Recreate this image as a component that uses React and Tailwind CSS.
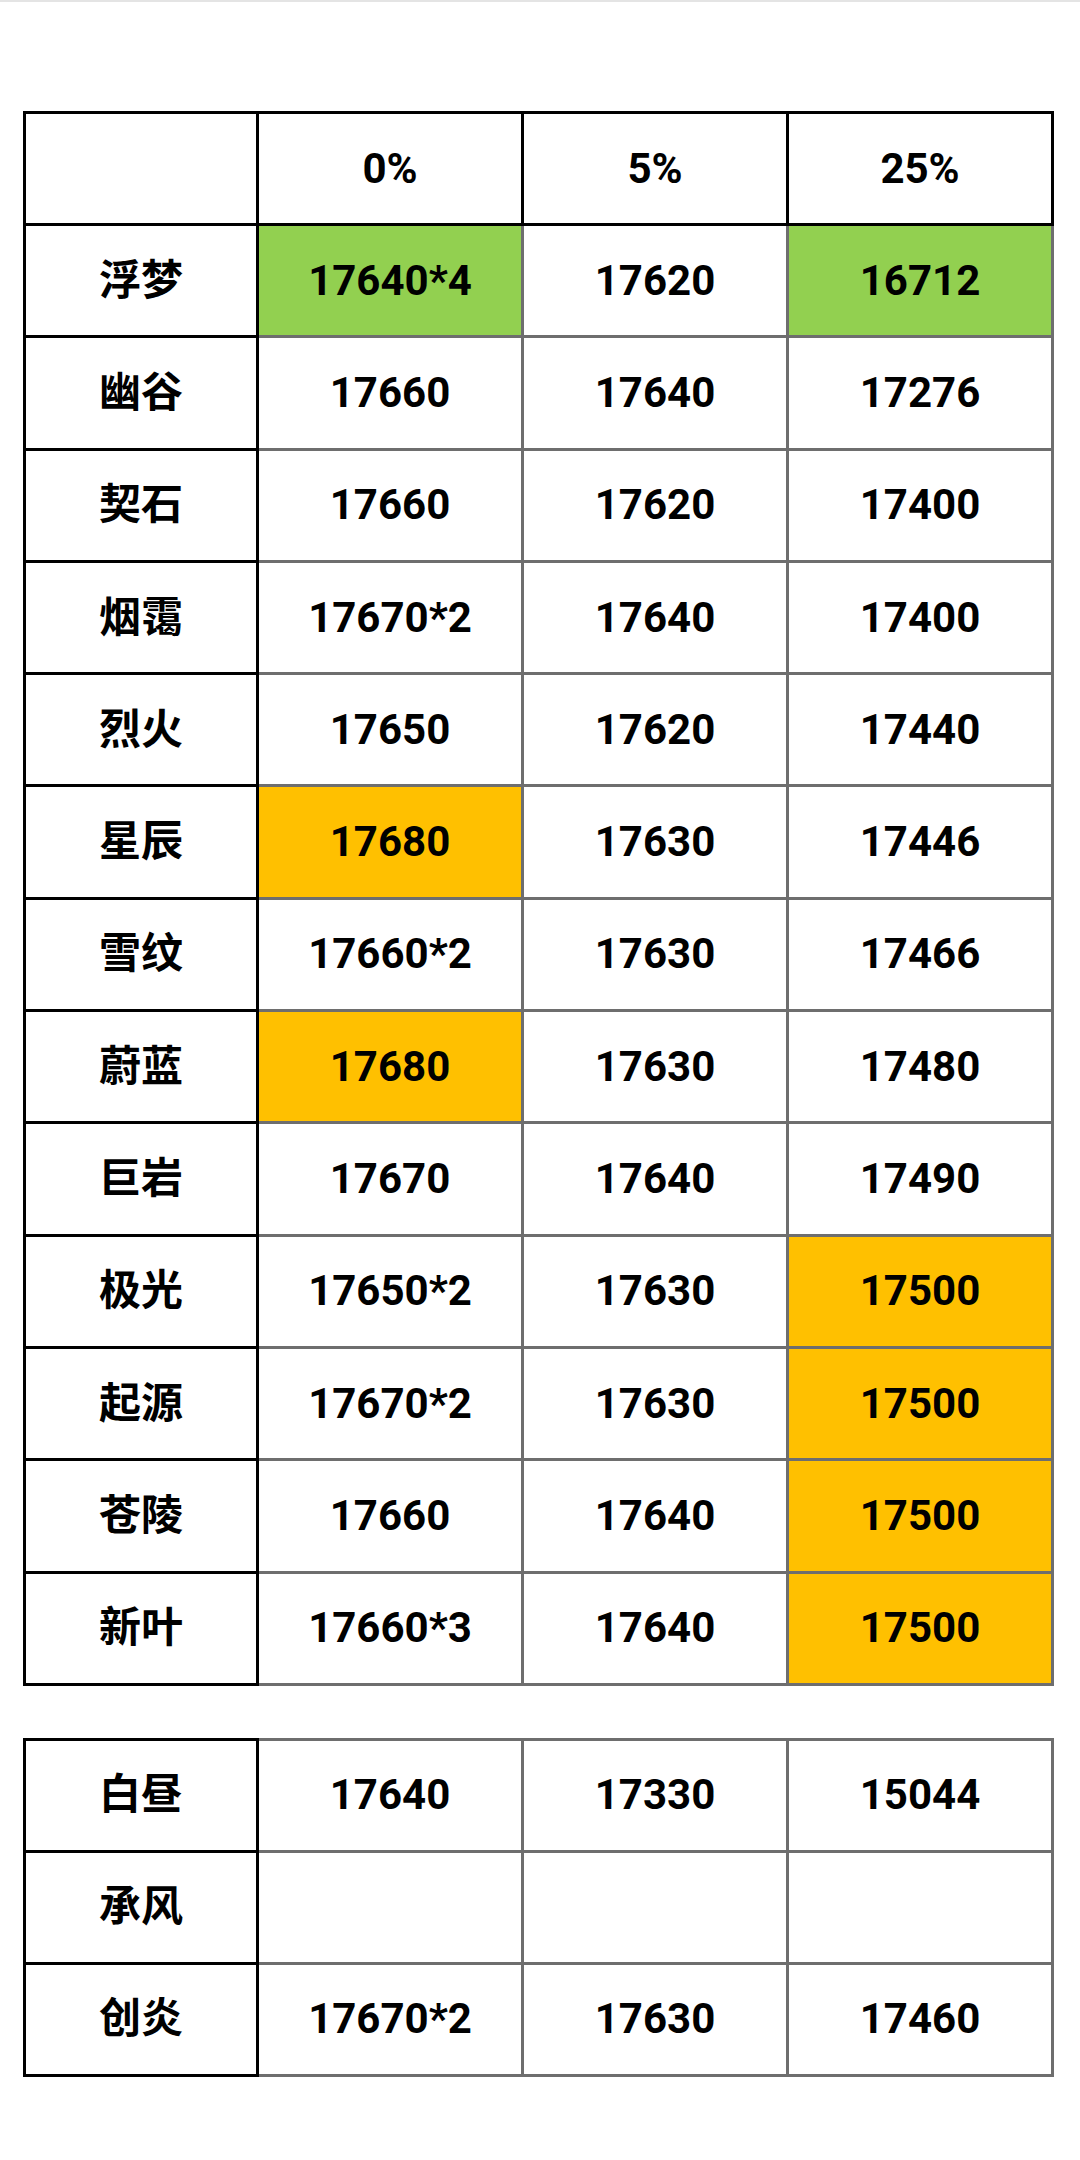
import React from "react";

const G = "green";
const O = "orange";

// [name, c0, c5, c25, highlights]
const mainRows = [
    ["浮梦", "17640*4", "17620", "16712", [G, null, G]],
    ["幽谷", "17660", "17640", "17276"],
    ["契石", "17660", "17620", "17400"],
    ["烟霭", "17670*2", "17640", "17400"],
    ["烈火", "17650", "17620", "17440"],
    ["星辰", "17680", "17630", "17446", [O, null, null]],
    ["雪纹", "17660*2", "17630", "17466"],
    ["蔚蓝", "17680", "17630", "17480", [O, null, null]],
    ["巨岩", "17670", "17640", "17490"],
    ["极光", "17650*2", "17630", "17500", [null, null, O]],
    ["起源", "17670*2", "17630", "17500", [null, null, O]],
    ["苍陵", "17660", "17640", "17500", [null, null, O]],
    ["新叶", "17660*3", "17640", "17500", [null, null, O]],
];

const extraRows = [
    ["白昼", "17640", "17330", "15044"],
    ["承风", "", "", ""],
    ["创炎", "17670*2", "17630", "17460"],
];

const fillClass = (c) => {
    if (c === G) return "bg-[#92d050]";
    if (c === O) return "bg-[#ffc000]";
    return "bg-white";
};

const Cell = ({ children, first, top, dark, fill, height }) => {
    return (
        <div
            className={`flex items-center justify-center border-r-[3px] border-b-[3px] ${first ? "border-l-[3px]" : ""} ${top ? "border-t-[3px]" : ""} ${dark ? "border-black" : "border-[#6e6e6e]"} ${fillClass(fill)} ${height}`}
        >
            {children}
        </div>
    );
};

const Table = ({ rows, header }) => {
    return (
        <div className="grid grid-cols-[236px_265px_265px_265px] w-[1031px]">
            {header && (
                <>
                    <Cell first top dark height="h-[115px]" />
                    {["0%", "5%", "25%"].map((h) => (
                        <Cell key={h} top dark height="h-[115px]">
                            {h}
                        </Cell>
                    ))}
                </>
            )}
            {rows.map((row, i) => {
                const isTop = !header && i === 0;
                const h = isTop ? "h-[115px]" : header ? "h-[112.3px]" : "h-[112px]";
                const marks = row[4] || [];
                return (
                    <React.Fragment key={row[0]}>
                        <Cell first top={isTop} dark height={h}>
                            {row[0]}
                        </Cell>
                        {[1, 2, 3].map((c) => (
                            <Cell key={c} top={isTop} fill={marks[c - 1]} height={h}>
                                {row[c]}
                            </Cell>
                        ))}
                    </React.Fragment>
                );
            })}
        </div>
    );
};

export default function App() {
    return (
        <div className="w-[1080px] min-h-[2160px] bg-white text-black font-['Roboto','Noto_Sans_CJK_SC',sans-serif] font-bold text-[42px] leading-none">
            <div className="h-[2px] bg-[#e4e4e4]"></div>
            <div className="pl-[23px] pt-[109px]">
                <Table rows={mainRows} header />
                <div className="h-[52px]"></div>
                <Table rows={extraRows} />
            </div>
        </div>
    );
}
